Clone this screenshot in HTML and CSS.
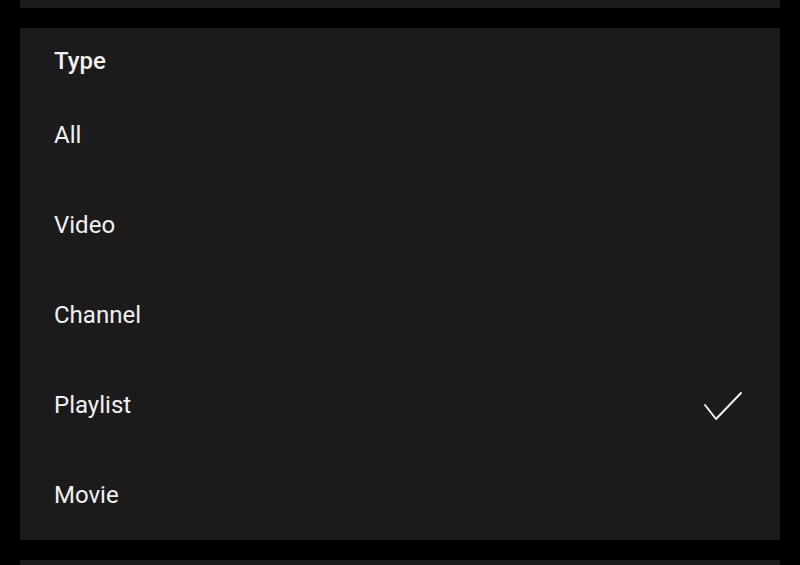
FILE: index.html
```html
<!DOCTYPE html>
<html>
<head>
<meta charset="utf-8">
<link rel="stylesheet" href="styles.css">
</head>
<body>
<div class="page">
  <div class="card card-top"></div>
  <div class="card card-main">
    <div class="header">Type</div>
    <div class="row">All</div>
    <div class="row">Video</div>
    <div class="row">Channel</div>
    <div class="row"><span>Playlist</span>
      <svg class="check" width="40" height="32" viewBox="0 0 40 32"><path d="M2 16 L13 30 L38 4" fill="none" stroke="#f1f1f1" stroke-width="2" stroke-linecap="round" stroke-linejoin="round"/></svg>
    </div>
    <div class="row">Movie</div>
  </div>
  <div class="card card-bottom"></div>
</div>
</body>
</html>
```
FILE: styles.css
```css
html, body {
  margin: 0;
  padding: 0;
  background: #000;
  height: 565px;
  overflow: hidden;
}
.page {
  padding: 0 20px;
  display: flex;
  flex-direction: column;
  gap: 20px;
  font-family: Roboto, "Noto Sans", sans-serif;
  color: #f1f1f1;
}
.card {
  background: #1b1b1b;
}
.card-top {
  height: 8px;
}
.card-main {
  height: 512px;
  display: flex;
  flex-direction: column;
}
.card-bottom {
  height: 20px;
}
.header {
  height: 57px;
  padding-top: 4px;
  line-height: 58px;
  padding-left: 34px;
  font-size: 24px;
  font-weight: 500;
}
.row {
  height: 88px;
  padding: 2px 37px 0 34px;
  line-height: 88px;
  font-size: 24px;
  display: flex;
  align-items: center;
  justify-content: space-between;
}
.check {
  display: block;
}
```
